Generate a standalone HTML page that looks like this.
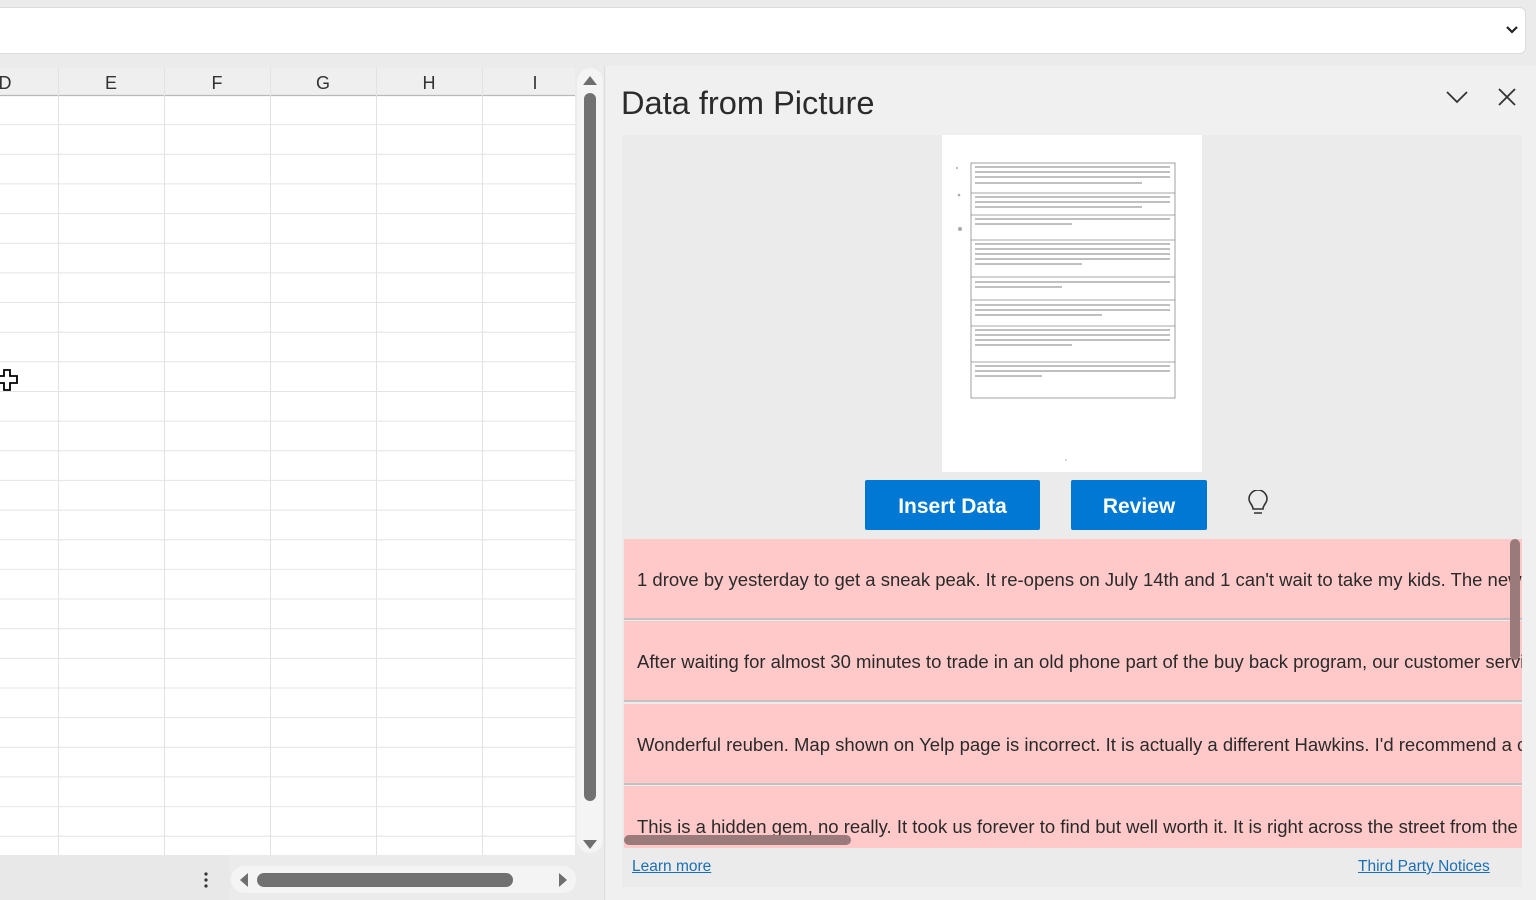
<!DOCTYPE html>
<html><head><meta charset="utf-8"><style>
*{margin:0;padding:0;box-sizing:border-box}
body{width:1536px;height:900px;overflow:hidden;background:#ebebeb;font-family:"Liberation Sans",sans-serif;position:relative}
.abs{position:absolute}
.item{position:absolute;left:624px;width:898px;background:#ffc9c9;overflow:hidden;white-space:nowrap;font-size:18.5px;color:#2a2a2a;padding-left:13px}
.btn{position:absolute;top:480px;height:50px;background:#0078d4;color:#fff;font-size:21px;font-weight:bold;text-align:center;line-height:53px;border-radius:2px}
a{color:#1a6fb5;text-decoration:underline;font-size:15.5px}
</style></head><body>
<div class="abs" style="left:0;top:0;width:1536px;height:66px;background:#ebebeb"></div>
<div class="abs" style="left:0;top:7px;width:1526px;height:47px;background:#fff;border:1px solid #dcdcdc;border-left:none;border-radius:0 6px 6px 0"></div>
<svg class="abs" style="left:1505px;top:24px" width="14" height="12"><path d="M2 3 L7 8 L12 3" stroke="#222" stroke-width="2.2" fill="none"/></svg>

<svg class="abs" style="left:0;top:66px" width="606" height="834">
<rect x="0" y="0" width="606" height="834" fill="#ebebeb"/>
<rect x="0" y="2" width="575" height="27" fill="#efefef"/>
<rect x="0" y="29" width="575" height="760" fill="#fff"/>
<line x1="0" y1="29.5" x2="575" y2="29.5" stroke="#b8b8b8" stroke-width="1.2"/>
<g stroke="#e2e2e2" stroke-width="1">
<line x1="58.5" y1="2" x2="58.5" y2="789"/><line x1="164.5" y1="2" x2="164.5" y2="789"/><line x1="270.5" y1="2" x2="270.5" y2="789"/><line x1="376.5" y1="2" x2="376.5" y2="789"/><line x1="482.5" y1="2" x2="482.5" y2="789"/>
</g>
<g stroke="#e4e4e4" stroke-width="1" id="rows"></g>
<g font-family="Liberation Sans" font-size="18" fill="#333" text-anchor="middle">
<text x="5" y="23">D</text><text x="111" y="23">E</text><text x="217" y="23">F</text><text x="323" y="23">G</text><text x="429" y="23">H</text><text x="535" y="23">I</text>
</g>
<rect x="577" y="2" width="26" height="785" rx="13" fill="#f4f4f4"/>
<path d="M583 19 L590 10 L597 19 Z" fill="#6f6f6f"/>
<rect x="584" y="27" width="12" height="708" rx="6" fill="#717171"/>
<path d="M583 774 L590 783 L597 774 Z" fill="#6f6f6f"/>
<line x1="604.5" y1="0" x2="604.5" y2="834" stroke="#dedede"/>
<rect x="0" y="789" width="230" height="45" fill="#e8e8e8"/>
<circle cx="206" cy="808" r="1.6" fill="#333"/><circle cx="206" cy="814" r="1.6" fill="#333"/><circle cx="206" cy="820" r="1.6" fill="#333"/>
<rect x="231" y="800" width="345" height="27" rx="13" fill="#f4f4f4"/>
<path d="M248 807 L240 814 L248 821 Z" fill="#6f6f6f"/>
<rect x="257" y="807" width="256" height="14" rx="7" fill="#717171"/>
<path d="M559 807 L567 814 L559 821 Z" fill="#6f6f6f"/>
<path d="M4 304 h6 v6 h7 v7 h-7 v7 h-6 v-7 h-6 v-7 h6 z" fill="#fff" stroke="#000" stroke-width="1.8"/>
</svg>
<script>
var g=document.getElementById('rows');var s='';for(var i=1;i<26;i++){var y=29+i*29.65;s+='<line x1="0" y1="'+y.toFixed(1)+'" x2="575" y2="'+y.toFixed(1)+'"/>';}g.innerHTML=s;
</script>

<div class="abs" style="left:606px;top:66px;width:930px;height:834px;background:#f0f0f0"></div>
<div class="abs" style="left:621px;top:84px;font-size:32.6px;color:#2b2b2b">Data from Picture</div>
<svg class="abs" style="left:1444px;top:88px" width="28" height="18"><path d="M3 4 L13 14 L23 4" stroke="#333" stroke-width="1.8" fill="none"/></svg>
<svg class="abs" style="left:1497px;top:87px" width="20" height="20"><path d="M2 2 L18 18 M18 2 L2 18" stroke="#333" stroke-width="1.8"/></svg>
<div class="abs" style="left:622px;top:135px;width:900px;height:752px;background:#ebebeb"></div>

<svg class="abs" style="left:942px;top:135px" width="260" height="337">
<rect width="260" height="337" fill="#fff"/>
<g fill="none" stroke="#8a8a8a" stroke-width="0.8">
<rect x="29" y="28" width="204" height="235"/>
<line x1="29" y1="58" x2="233" y2="58"/><line x1="29" y1="80" x2="233" y2="80"/><line x1="29" y1="105" x2="233" y2="105"/><line x1="29" y1="142" x2="233" y2="142"/><line x1="29" y1="165" x2="233" y2="165"/><line x1="29" y1="191" x2="233" y2="191"/><line x1="29" y1="227" x2="233" y2="227"/>
</g>
<g stroke="#9a9a9a" stroke-width="1.3">
<line x1="33" y1="32" x2="228" y2="32"/><line x1="33" y1="37" x2="228" y2="37"/><line x1="33" y1="42" x2="228" y2="42"/><line x1="33" y1="48" x2="200" y2="48"/>
<line x1="33" y1="62" x2="228" y2="62"/><line x1="33" y1="67" x2="228" y2="67"/><line x1="33" y1="72" x2="200" y2="72"/>
<line x1="33" y1="84" x2="228" y2="84"/><line x1="33" y1="89" x2="130" y2="89"/>
<line x1="33" y1="109" x2="228" y2="109"/><line x1="33" y1="114" x2="228" y2="114"/><line x1="33" y1="119" x2="228" y2="119"/><line x1="33" y1="124" x2="228" y2="124"/><line x1="33" y1="129" x2="140" y2="129"/>
<line x1="33" y1="147" x2="228" y2="147"/><line x1="33" y1="152" x2="120" y2="152"/>
<line x1="33" y1="170" x2="228" y2="170"/><line x1="33" y1="175" x2="228" y2="175"/><line x1="33" y1="180" x2="160" y2="180"/>
<line x1="33" y1="195" x2="228" y2="195"/><line x1="33" y1="200" x2="228" y2="200"/><line x1="33" y1="205" x2="228" y2="205"/><line x1="33" y1="210" x2="130" y2="210"/>
<line x1="33" y1="231" x2="228" y2="231"/><line x1="33" y1="236" x2="228" y2="236"/><line x1="33" y1="241" x2="100" y2="241"/>
</g>
<g fill="#aaa"><circle cx="15" cy="33" r="1"/><circle cx="17" cy="60" r="1.3"/><circle cx="18" cy="94" r="2"/><circle cx="124" cy="325" r="0.8"/></g>
</svg>

<div class="btn" style="left:865px;width:175px">Insert Data</div>
<div class="btn" style="left:1071px;width:136px">Review</div>
<svg class="abs" style="left:1245px;top:490px" width="26" height="30"><path d="M8 19 C8 15 4 13 4 9 A9 9 0 0 1 22 9 C22 13 18 15 18 19 Z M8 19 H18 M9 23 H17" stroke="#333" stroke-width="1.6" fill="none"/></svg>

<div class="item" style="top:539px;height:79px;line-height:81px">1 drove by yesterday to get a sneak peak. It re-opens on July 14th and 1 can't wait to take my kids. The new range looks amazing.</div>
<div class="abs" style="left:624px;top:618px;width:898px;height:2px;background:#c2c2c2"></div>
<div class="item" style="top:621px;height:79px;line-height:82px">After waiting for almost 30 minutes to trade in an old phone part of the buy back program, our customer service rep</div>
<div class="abs" style="left:624px;top:700px;width:898px;height:2px;background:#c2c2c2"></div>
<div class="item" style="top:704px;height:79px;line-height:82px">Wonderful reuben. Map shown on Yelp page is incorrect. It is actually a different Hawkins. I'd recommend a call for directions.</div>
<div class="abs" style="left:624px;top:783px;width:898px;height:2px;background:#c2c2c2"></div>
<div class="item" style="top:786px;height:62px;line-height:82px">This is a hidden gem, no really. It took us forever to find but well worth it. It is right across the street from the Rankin Police Station.</div>
<div class="abs" style="left:1510px;top:539px;width:10px;height:121px;border-radius:5px;background:#9a7a7a"></div>
<div class="abs" style="left:624px;top:835px;width:227px;height:10px;border-radius:5px;background:#9a7a7a"></div>

<a class="abs" style="left:632px;top:858px">Learn more</a>
<a class="abs" style="left:1358px;top:858px">Third Party Notices</a>
</body></html>
